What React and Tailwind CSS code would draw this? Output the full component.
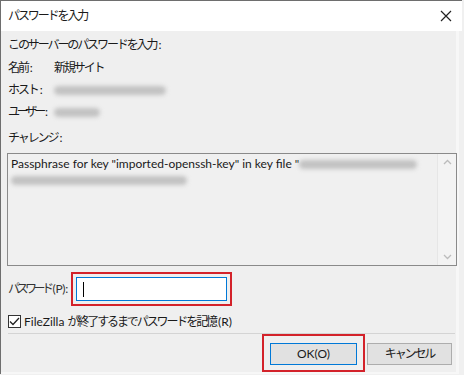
import React from "react";

const jp = "tracking-[-2.1px]";

const Blur = ({ w }) => (
    <span className="inline-block h-[9px] rounded-full bg-[#c2c2c2] blur-[2px]" style={{ width: w }} />
);

const Label = ({ text, tight }) => (
    <span className="w-[46px] shrink-0">
        <span className={tight ? "tracking-[-3.2px]" : jp}>{text}</span>
        <span className="ml-[2px]">:</span>
    </span>
);

const App = () => {
    return (
        <div
            className="w-[464px] h-[375px] overflow-hidden bg-[#f0f0f0] text-[12px] text-[#1a1a1a] whitespace-nowrap"
            style={{ fontFamily: '"Lato", "Noto Sans CJK JP", sans-serif' }}
        >
            <div className="w-[462px] h-[374px] border-t border-l border-[#6e6e6e] flex flex-col">
                {/* Title bar */}
                <div className="h-[30px] bg-white flex items-center justify-between pl-[7px] pr-[9px] shrink-0">
                    <span className={jp}>パスワードを入力</span>
                    <svg width="12" height="12" viewBox="0 0 12 12" className="mr-[1px]">
                        <path d="M1 1 L11 11 M11 1 L1 11" stroke="#222" strokeWidth="1.2" />
                    </svg>
                </div>

                {/* Body */}
                <div className="flex-1 flex flex-col bg-[#efefef] border-r-[3px] border-r-[#f7f7f7] mr-[3px] border-b-[2px] border-b-[#f7f7f7] mb-[1px]">
                    <div className="pl-[7px] pt-[2px]">
                        <div className="h-[23px] flex items-center">
                            <span className={jp}>このサーバーのパスワードを入力</span>
                            <span className="ml-[2px]">:</span>
                        </div>
                        <div className="h-[23px] flex items-center">
                            <Label text="名前" />
                            <span className={jp}>新規サイト</span>
                        </div>
                        <div className="h-[22px] flex items-center">
                            <Label text="ホスト" />
                            <Blur w="112px" />
                        </div>
                        <div className="h-[22px] flex items-center">
                            <Label text="ユーザー" tight />
                            <Blur w="46px" />
                        </div>
                        <div className="h-[22px] flex items-center mt-[4px]">
                            <span className={jp}>チャレンジ</span>
                            <span className="ml-[2px]">:</span>
                        </div>
                    </div>

                    {/* Challenge box */}
                    <div className="ml-[6px] mt-[4px] w-[450px] h-[113px] border border-[#8a8a8a] bg-[#f0f0f0] flex shrink-0">
                        <div className="flex-1 pl-[3px] pt-[2px] leading-[16px]">
                            <div className="flex items-center">
                                <span>Passphrase for key "imported-openssh-key" in key file "</span>
                                <Blur w="118px" />
                            </div>
                            <div className="h-[16px] flex items-center">
                                <Blur w="176px" />
                            </div>
                        </div>
                        <div className="w-[19px] border-l border-[#e6e6e6] bg-[#f3f3f3] flex flex-col items-center justify-between py-[5px]">
                            <svg width="9" height="6" viewBox="0 0 9 6">
                                <path d="M1 5 L4.5 1.5 L8 5" stroke="#bcbcbc" strokeWidth="1.3" fill="none" />
                            </svg>
                            <svg width="9" height="6" viewBox="0 0 9 6">
                                <path d="M1 1 L4.5 4.5 L8 1" stroke="#bcbcbc" strokeWidth="1.3" fill="none" />
                            </svg>
                        </div>
                    </div>

                    {/* Password row */}
                    <div className="flex items-center pl-[7px] mt-[6px] shrink-0">
                        <span className="w-[63px] shrink-0 text-[#333]">
                            <span className="tracking-[-3.5px]">パスワード</span>
                            <span className="ml-[2px] tracking-[-0.3px]">(P):</span>
                        </span>
                        <div className="border-2 border-[#d3222a] p-[3px]">
                            <div className="w-[151px] h-[24px] bg-white border border-[#0078d7] flex items-center pl-[6px]">
                                <div className="w-[1px] h-[15px] bg-black" />
                            </div>
                        </div>
                    </div>

                    {/* Remember checkbox */}
                    <div className="flex items-center pl-[7px] mt-[8px] h-[15px] shrink-0">
                        <div className="w-[13px] h-[13px] border border-[#333] bg-white flex items-center justify-center">
                            <svg width="11" height="9" viewBox="0 0 11 9">
                                <path d="M1 4.5 L4 7.5 L10 1" stroke="#222" strokeWidth="1.3" fill="none" />
                            </svg>
                        </div>
                        <span className="ml-[3px]">
                            FileZilla <span className={jp}>が終了するまでパスワードを記憶</span>
                            <span className="ml-[2px]">(R)</span>
                        </span>
                    </div>

                    {/* Separator */}
                    <div className="ml-[7px] mr-[1px] mt-[4px] h-[1px] bg-[#d4d4d4] shrink-0" />

                    {/* Buttons */}
                    <div className="flex items-start justify-end pr-[4px]">
                        <div className="border-2 border-[#d3222a] px-[6px] pt-[7px] pb-[5px]">
                            <button className="w-[87px] h-[22px] bg-[#e1e1e1] border border-[#0078d7] flex items-center justify-center">
                                OK(O)
                            </button>
                        </div>
                        <button className="ml-[2px] mt-[9px] w-[85px] h-[22px] bg-[#e1e1e1] border border-[#adadad] flex items-center justify-center">
                            <span className={jp}>キャンセル</span>
                        </button>
                    </div>
                </div>
            </div>
        </div>
    );
};

export default App;
